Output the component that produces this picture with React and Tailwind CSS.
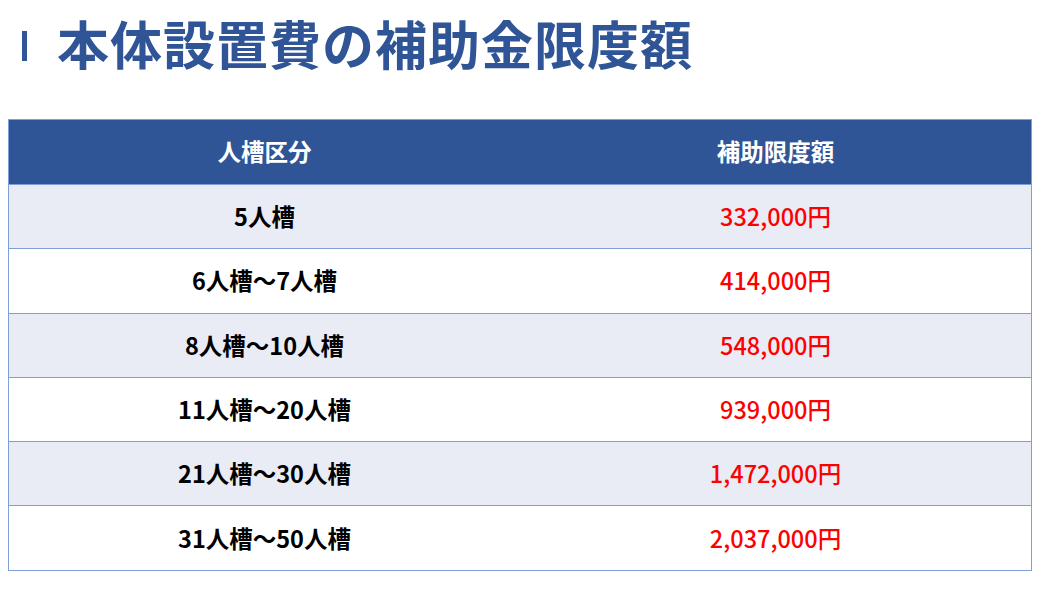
const rows = [
  { size: '5人槽', amount: '332,000円' },
  { size: '6人槽～7人槽', amount: '414,000円' },
  { size: '8人槽～10人槽', amount: '548,000円' },
  { size: '11人槽～20人槽', amount: '939,000円' },
  { size: '21人槽～30人槽', amount: '1,472,000円' },
  { size: '31人槽～50人槽', amount: '2,037,000円' },
]

export default function App() {
  return (
    <div className="w-[1040px] h-[600px] bg-white font-['Noto_Sans_CJK_JP',sans-serif] overflow-hidden">
      {/* Title */}
      <div className="flex items-center h-[84px] pl-[22px] pt-[2px]">
        <div className="w-[5px] h-[30px] bg-[#2f5597] mt-[6px]"></div>
        <h1 className="ml-[30px] text-[52px] leading-none font-bold text-[#2f5597] tracking-[1px]">
          本体設置費の補助金限度額
        </h1>
      </div>

      {/* Table */}
      <div className="mt-[35px] ml-[8px] w-[1024px] border border-[#7f9fd9]">
        <div className="grid grid-cols-2 h-[64px] bg-[#2f5597] text-white text-[23.5px] font-bold">
          <div className="flex items-center justify-center">人槽区分</div>
          <div className="flex items-center justify-center">補助限度額</div>
        </div>
        {rows.map((r, i) => (
          <div
            key={r.size}
            className={`grid grid-cols-2 h-[64.3px] border-t border-[#7f9fd9] text-[23.5px] ${i % 2 === 0 ? 'bg-[#e9ebf5]' : 'bg-white'}`}
          >
            <div className="flex items-center justify-center font-bold text-black">{r.size}</div>
            <div className="flex items-center justify-center font-medium text-[#ff0000]">{r.amount}</div>
          </div>
        ))}
      </div>
    </div>
  )
}
